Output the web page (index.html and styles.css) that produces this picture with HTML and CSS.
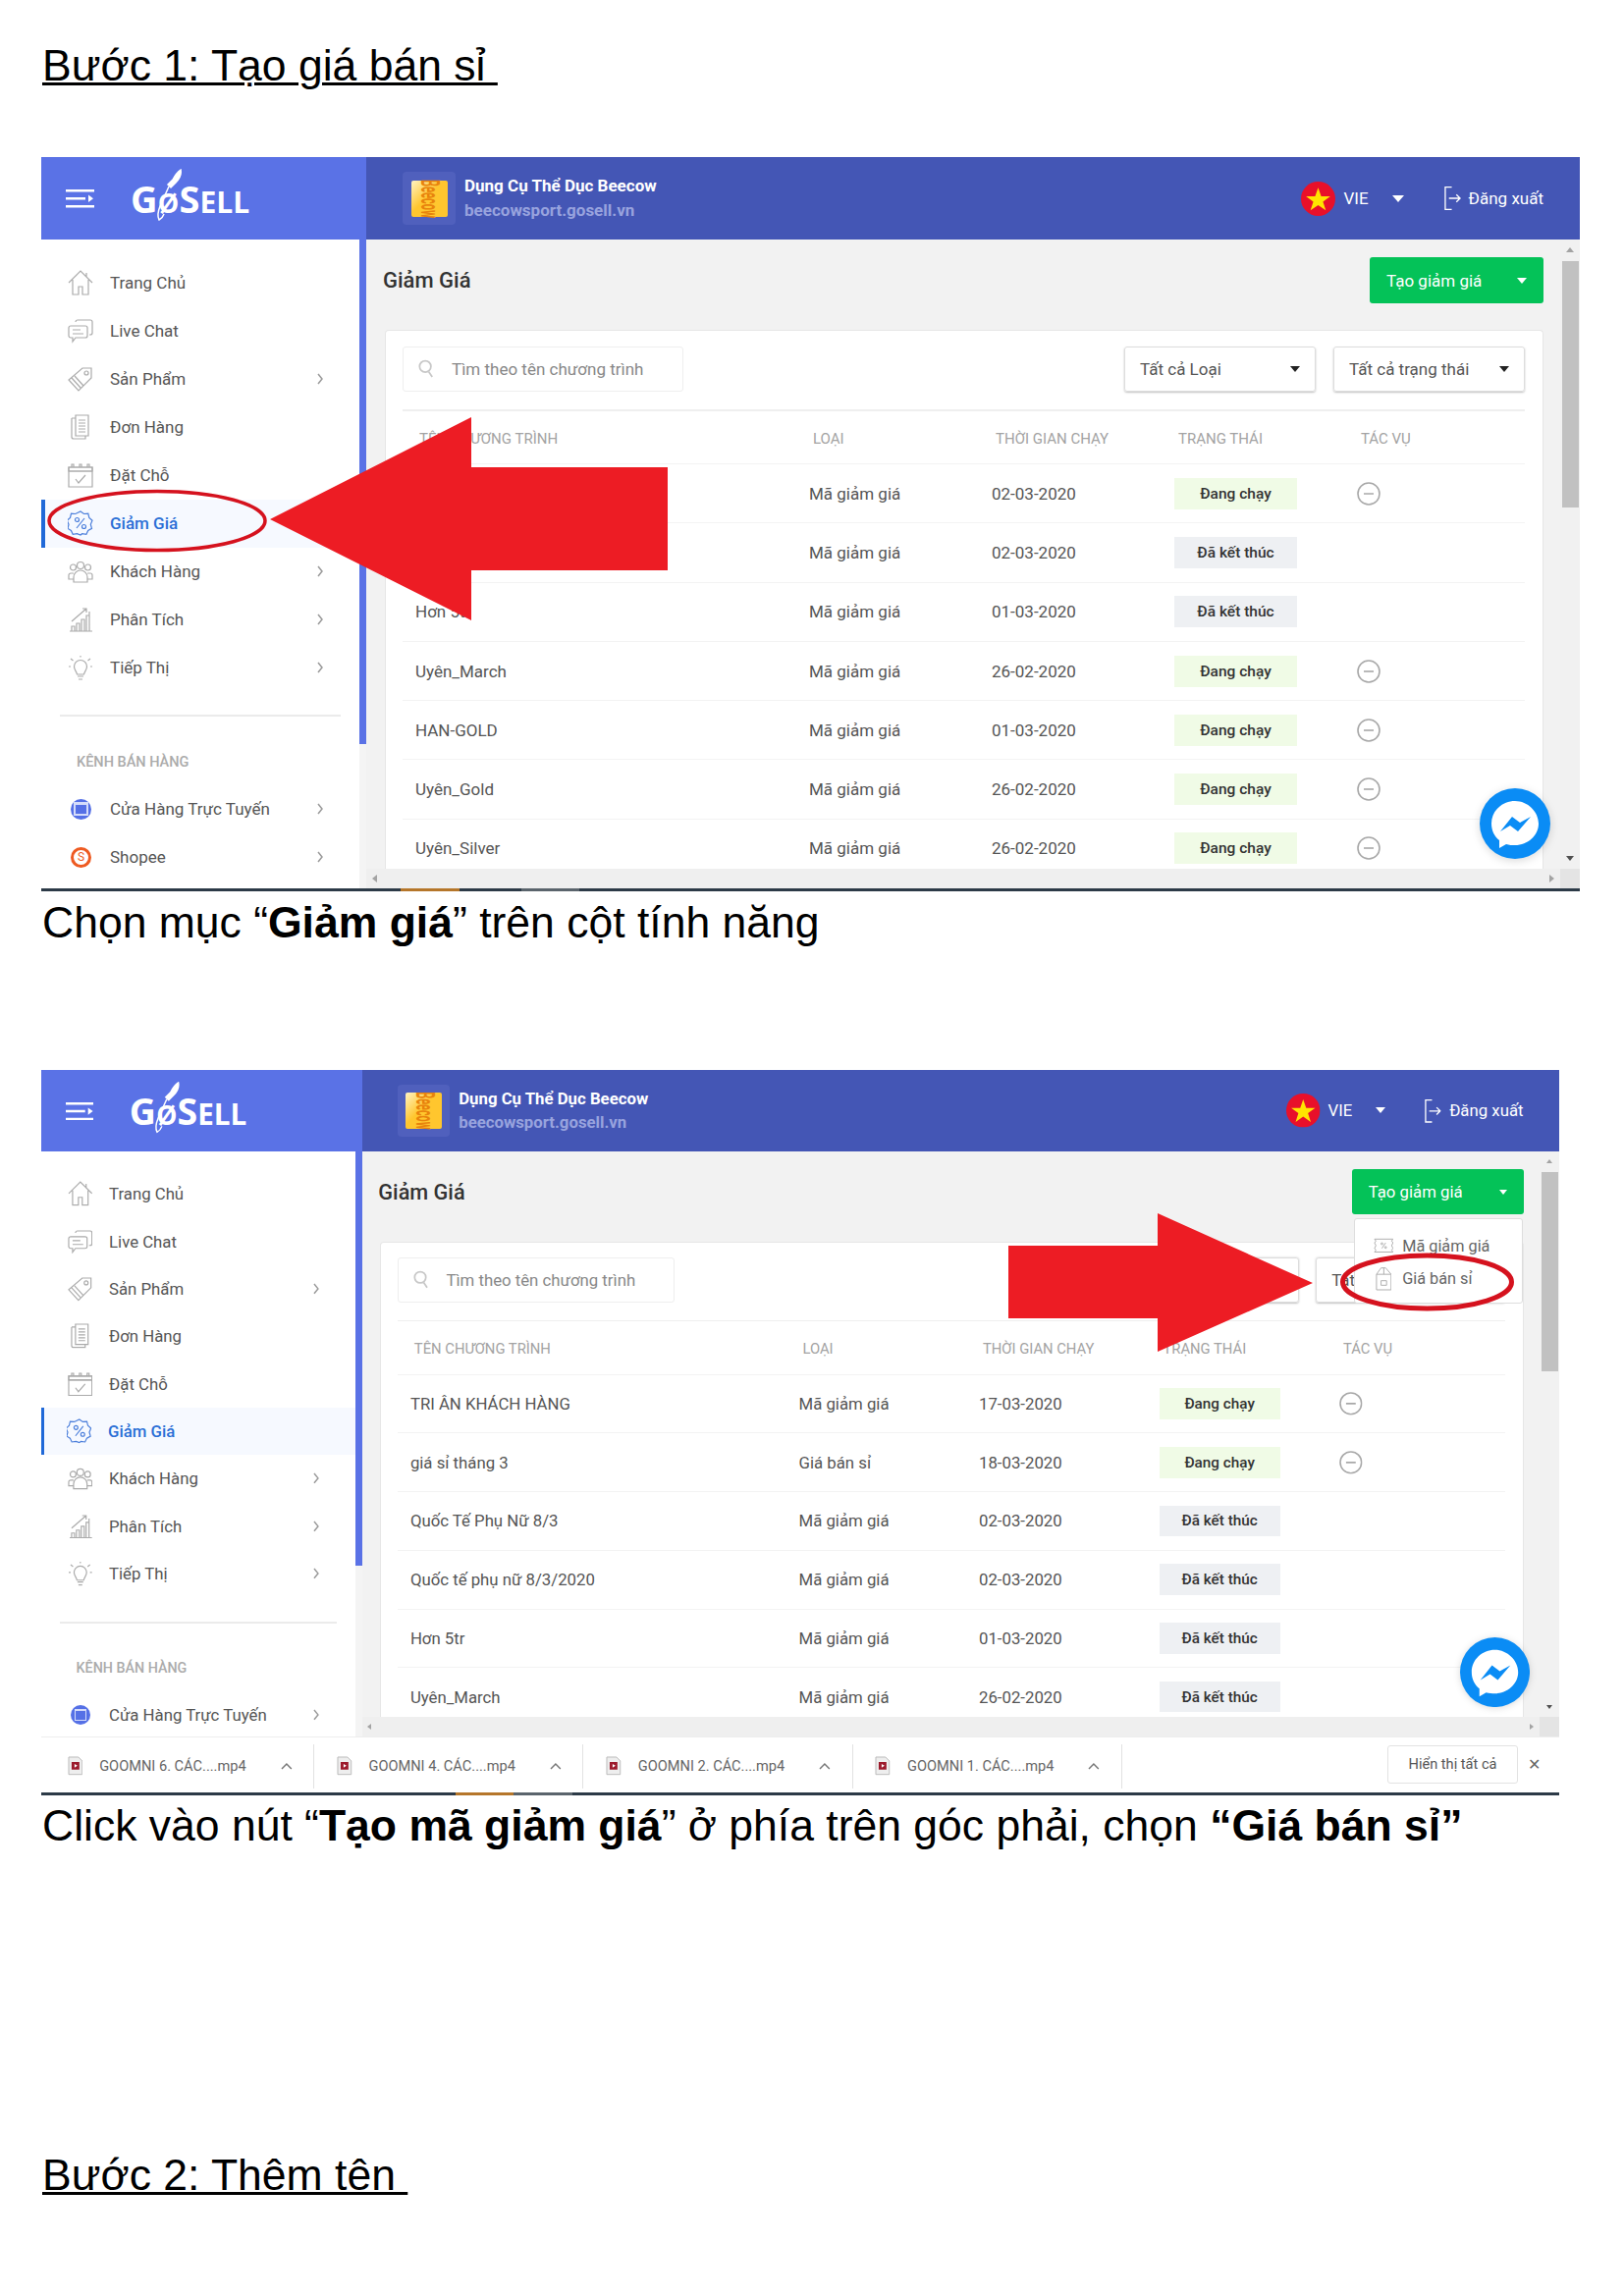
FILE: index.html
```html
<!DOCTYPE html>
<html lang="vi">
<head>
    <meta charset="UTF-8">
    <title>Tạo giá bán sỉ</title>
    <link rel="stylesheet" href="styles.css">
</head>
<body>
    <svg class="sprite" xmlns="http://www.w3.org/2000/svg">
        <symbol id="i-home" viewBox="0 0 26 26"><path d="M1 13 13 1l12 12M5 10v15h6v-8h4v8h6V10M19 7V3"/></symbol>
        <symbol id="i-chat" viewBox="0 0 26 26"><path d="M8 4a2 2 0 0 1 2-2h13a2 2 0 0 1 2 2v11a2 2 0 0 1-2 2h-1M3 8h15a2 2 0 0 1 2 2v8a2 2 0 0 1-2 2H8l-3 4v-4H3a2 2 0 0 1-2-2v-8a2 2 0 0 1 2-2zM5 12h8M5 16h11"/></symbol>
        <symbol id="i-tag" viewBox="0 0 26 26"><path d="M15 2h9v10L11 25 1 14zM4 12l9 10M7 10l9 10"/><circle cx="19" cy="7" r="2"/></symbol>
        <symbol id="i-orders" viewBox="0 0 26 26"><path d="M8 1h13v21H8zM4 4h4M4 4v19a2 2 0 0 0 2 2h12v-3M11 6h7M11 9h7M11 12h7M11 15h7M11 18h7"/></symbol>
        <symbol id="i-cal" viewBox="0 0 26 26"><path d="M1 5h24v20H1zM1 9h24M8 17l3 4 7-8"/><path class="fill" d="M1 5h24v4H1zM4 2h2v3H4zM12 2h2v3h-2zM20 2h2v3h-2z"/></symbol>
        <symbol id="i-percent" viewBox="0 0 26 26"><path d="m13 1 3.500 2.500 4.300-.3 1 4.200 3.200 2.800-1.700 4 1.200 4.200-3.800 2-1.800 3.900-4.300-.6L13 25l-3.500-1.300-4.300.6-1.800-3.900-3.400-2 1-4.200-1.700-4 3.200-2.800 1-4.200 4.300.3zM17 8l-8 10"/><circle cx="9.500" cy="9.500" r="2"/><circle cx="16.500" cy="16.500" r="2"/></symbol>
        <symbol id="i-users" viewBox="0 0 26 26"><circle cx="13" cy="7" r="3.500"/><circle cx="5.500" cy="9" r="3"/><circle cx="20.500" cy="9" r="3"/><path d="M6 24v-5a6 6 0 0 1 14 0v5zM6 15H3a2 2 0 0 0-2 2v4h5M20 15h3a2 2 0 0 1 2 2v4h-5"/></symbol>
        <symbol id="i-chart" viewBox="0 0 26 26"><path d="M2 25h23M4 25v-5h3v5M9 25v-8h3v8M14 25V13h3v12M19 25V9h3v16M4 15 19 2M15 2h4v4M22 5v4"/></symbol>
        <symbol id="i-bulb" viewBox="0 0 26 26"><path d="M6.500 12a6.500 6.500 0 1 1 13 0c0 3.500-2.500 5-3 8h-7c-.5-3-3-4.500-3-8zM10 22h6M11 25h4M13 1v1.500M3 4l2.500 2M23 4l-2.500 2M1 12h2M25 12h-2"/></symbol>
        <symbol id="i-search" viewBox="0 0 18 22"><circle cx="8" cy="8" r="6.500"/><path d="m12 14 4 6"/></symbol>
        <symbol id="i-chev" viewBox="0 0 8 14"><path d="m2 2 4 5-4 5"/></symbol>
        <symbol id="i-up" viewBox="0 0 12 8"><path d="m1 7 5-5 5 5"/></symbol>
        <symbol id="i-minus" viewBox="0 0 24 24"><circle cx="12" cy="12" r="11"/><path d="M7 12h10"/></symbol>
        <symbol id="i-ticket" viewBox="0 0 22 16"><path d="M1 1h20l-1.500 2 1.500 2-1.500 3 1.500 3-1.500 2 1.500 2H1l1.500-2L1 11l1.500-3L1 5l1.500-2zM9 11l4-6"/><circle cx="9" cy="6" r="1"/><circle cx="13" cy="10" r="1"/></symbol>
        <symbol id="i-pack" viewBox="0 0 18 26"><path d="M1 8h16v17H1zM1 8l5-7h5l6 7M9 1v7M6 15h6v5H6z"/></symbol>
        <symbol id="i-file" viewBox="0 0 16 20"><path class="paper" d="M1 1h10l4 4v14H1z"/><path class="red" d="M4 6h8v8H4z"/><path class="play" d="m7 8 3 2-3 2z"/></symbol>
        <symbol id="i-logout" viewBox="0 0 18 26"><path d="M8 1H1v24h7M5 13h12M13 9l4 4-4 4"/></symbol>
        <symbol id="i-messenger" viewBox="0 0 72 72"><circle class="msg-blue" cx="36" cy="36" r="36"/><path class="msg-white" d="M36 13c-13 0-24 10-24 23 0 7 3 13 8 17v8l7-4c3 1 6 1 9 1 13 0 24-10 24-22S49 13 36 13z"/><path class="msg-blue" d="m21 44 12-15 8 6 11-6-13 15-8-6z"/></symbol>
        <symbol id="i-burger" viewBox="0 0 29 20"><path d="M0 1h29v2.500H0zM0 9h20v2.500H0zM0 17h29v2.500H0zM23 6.500l5 3.700-5 3.700z"/></symbol>
        <symbol id="i-rocket" viewBox="0 0 30 56"><path class="rocket-body" d="M27 1c1 5-1 9-5 13l-5 5-3-3 5-5c2-4 5-8 8-10z"/><path d="M15 18 6 38c-2 5-3 10-1 14 2-1 4-3 5-6"/></symbol>
        <symbol id="i-star" viewBox="0 0 34 34"><circle class="flag-red" cx="17" cy="17" r="17"/><path class="flag-star" d="m17 6 3 8.500h9l-7.200 5.300 2.800 8.700-7.600-5.300-7.600 5.300 2.800-8.700L5 14.500h9z"/></symbol>
    </svg>

    <main class="page">
        <h1 class="step-title">Bước 1: Tạo giá bán sỉ&nbsp;</h1>

        <section class="shot">
            <div class="app">
                <header class="topbar">
                    <div class="topbar-left">
                        <svg class="burger"><use href="#i-burger"/></svg>
                        <div class="logo">G<span class="logo-o">ø</span>S<small>ELL</small><svg class="logo-rocket"><use href="#i-rocket"/></svg></div>
                    </div>
                    <div class="topbar-right">
                        <div class="store-logo"><div class="store-img"><span>Beecow</span></div></div>
                        <div class="store-info">
                            <strong>Dụng Cụ Thể Dục Beecow</strong>
                            <span>beecowsport.gosell.vn</span>
                        </div>
                        <div class="lang">
                            <svg class="flag"><use href="#i-star"/></svg>
                            <span>VIE</span>
                            <i class="caret caret-white"></i>
                        </div>
                        <div class="logout"><svg class="ico-logout"><use href="#i-logout"/></svg>Đăng xuất</div>
                    </div>
                </header>
                <div class="workspace workspace-a">
                    <aside class="sidebar">
                        <nav class="side-nav">
                            <a class="nav-item"><svg class="ico"><use href="#i-home"/></svg>Trang Chủ</a>
                            <a class="nav-item"><svg class="ico"><use href="#i-chat"/></svg>Live Chat</a>
                            <a class="nav-item"><svg class="ico"><use href="#i-tag"/></svg>Sản Phẩm<svg class="chev"><use href="#i-chev"/></svg></a>
                            <a class="nav-item"><svg class="ico"><use href="#i-orders"/></svg>Đơn Hàng</a>
                            <a class="nav-item"><svg class="ico"><use href="#i-cal"/></svg>Đặt Chỗ</a>
                            <a class="nav-item active"><svg class="ico"><use href="#i-percent"/></svg>Giảm Giá</a>
                            <a class="nav-item"><svg class="ico"><use href="#i-users"/></svg>Khách Hàng<svg class="chev"><use href="#i-chev"/></svg></a>
                            <a class="nav-item"><svg class="ico"><use href="#i-chart"/></svg>Phân Tích<svg class="chev"><use href="#i-chev"/></svg></a>
                            <a class="nav-item"><svg class="ico"><use href="#i-bulb"/></svg>Tiếp Thị<svg class="chev"><use href="#i-chev"/></svg></a>
                            <div class="nav-divider"></div>
                            <div class="nav-label">KÊNH BÁN HÀNG</div>
                            <a class="nav-item"><span class="channel channel-web"></span>Cửa Hàng Trực Tuyến<svg class="chev"><use href="#i-chev"/></svg></a>
                            <a class="nav-item"><span class="channel channel-shopee">S</span>Shopee<svg class="chev"><use href="#i-chev"/></svg></a>
                        </nav>
                        <div class="side-track"><div class="side-thumb side-thumb-a"></div></div>
                    </aside>
                    <div class="main">
                        <div class="content">
                            <div class="page-head">
                                <h2>Giảm Giá</h2>
                                <div class="btn-create">Tạo giảm giá<i class="caret caret-white"></i></div>
                            </div>
                            <div class="card">
                                <div class="filters">
                                    <div class="search"><svg class="ico-search"><use href="#i-search"/></svg>Tìm theo tên chương trình</div>
                                    <div class="selects">
                                        <div class="select">Tất cả Loại<i class="caret"></i></div>
                                        <div class="select">Tất cả trạng thái<i class="caret"></i></div>
                                    </div>
                                </div>
                                <div class="row row-head">
                                    <span>TÊN CHƯƠNG TRÌNH</span><span>LOẠI</span><span>THỜI GIAN CHẠY</span><span>TRẠNG THÁI</span><span>TÁC VỤ</span>
                                </div>
                                <div class="row"><span>Quốc Tế Phụ Nữ 8/3</span><span>Mã giảm giá</span><span>02-03-2020</span><span class="badge on">Đang chạy</span><svg class="ico-minus"><use href="#i-minus"/></svg></div>
                                <div class="row"><span>Quốc tế phụ nữ 8/3/2020</span><span>Mã giảm giá</span><span>02-03-2020</span><span class="badge off">Đã kết thúc</span></div>
                                <div class="row"><span>Hơn 5tr</span><span>Mã giảm giá</span><span>01-03-2020</span><span class="badge off">Đã kết thúc</span></div>
                                <div class="row"><span>Uyên_March</span><span>Mã giảm giá</span><span>26-02-2020</span><span class="badge on">Đang chạy</span><svg class="ico-minus"><use href="#i-minus"/></svg></div>
                                <div class="row"><span>HAN-GOLD</span><span>Mã giảm giá</span><span>01-03-2020</span><span class="badge on">Đang chạy</span><svg class="ico-minus"><use href="#i-minus"/></svg></div>
                                <div class="row"><span>Uyên_Gold</span><span>Mã giảm giá</span><span>26-02-2020</span><span class="badge on">Đang chạy</span><svg class="ico-minus"><use href="#i-minus"/></svg></div>
                                <div class="row"><span>Uyên_Silver</span><span>Mã giảm giá</span><span>26-02-2020</span><span class="badge on">Đang chạy</span><svg class="ico-minus"><use href="#i-minus"/></svg></div>
                            </div>
                            <div class="hscroll"><i class="arrow-left"></i><i class="arrow-right"></i></div>
                        </div>
                        <div class="vscroll">
                            <i class="arrow-up"></i>
                            <div class="v-thumb v-thumb-a"></div>
                            <i class="arrow-down"></i>
                            <div class="corner"></div>
                        </div>
                        <svg class="messenger"><use href="#i-messenger"/></svg>
                    </div>
                </div>
                <div class="taskline taskline-a"></div>
            </div>
            <svg class="marks" xmlns="http://www.w3.org/2000/svg">
                <ellipse class="ring" cx="118" cy="370.500" rx="110" ry="30"/>
                <polygon class="big-arrow" points="233,369 438,265 438,316 638,316 638,421 438,421 438,472"/>
            </svg>
        </section>

        <p class="caption caption-a">Chọn mục “<b>Giảm giá</b>” trên cột tính năng</p>

        <section class="shot shot-b">
            <div class="app app-small">
                <header class="topbar">
                    <div class="topbar-left">
                        <svg class="burger"><use href="#i-burger"/></svg>
                        <div class="logo">G<span class="logo-o">ø</span>S<small>ELL</small><svg class="logo-rocket"><use href="#i-rocket"/></svg></div>
                    </div>
                    <div class="topbar-right">
                        <div class="store-logo"><div class="store-img"><span>Beecow</span></div></div>
                        <div class="store-info">
                            <strong>Dụng Cụ Thể Dục Beecow</strong>
                            <span>beecowsport.gosell.vn</span>
                        </div>
                        <div class="lang">
                            <svg class="flag"><use href="#i-star"/></svg>
                            <span>VIE</span>
                            <i class="caret caret-white"></i>
                        </div>
                        <div class="logout"><svg class="ico-logout"><use href="#i-logout"/></svg>Đăng xuất</div>
                    </div>
                </header>
                <div class="workspace workspace-b">
                    <aside class="sidebar">
                        <nav class="side-nav">
                            <a class="nav-item"><svg class="ico"><use href="#i-home"/></svg>Trang Chủ</a>
                            <a class="nav-item"><svg class="ico"><use href="#i-chat"/></svg>Live Chat</a>
                            <a class="nav-item"><svg class="ico"><use href="#i-tag"/></svg>Sản Phẩm<svg class="chev"><use href="#i-chev"/></svg></a>
                            <a class="nav-item"><svg class="ico"><use href="#i-orders"/></svg>Đơn Hàng</a>
                            <a class="nav-item"><svg class="ico"><use href="#i-cal"/></svg>Đặt Chỗ</a>
                            <a class="nav-item active"><svg class="ico"><use href="#i-percent"/></svg>Giảm Giá</a>
                            <a class="nav-item"><svg class="ico"><use href="#i-users"/></svg>Khách Hàng<svg class="chev"><use href="#i-chev"/></svg></a>
                            <a class="nav-item"><svg class="ico"><use href="#i-chart"/></svg>Phân Tích<svg class="chev"><use href="#i-chev"/></svg></a>
                            <a class="nav-item"><svg class="ico"><use href="#i-bulb"/></svg>Tiếp Thị<svg class="chev"><use href="#i-chev"/></svg></a>
                            <div class="nav-divider"></div>
                            <div class="nav-label">KÊNH BÁN HÀNG</div>
                            <a class="nav-item"><span class="channel channel-web"></span>Cửa Hàng Trực Tuyến<svg class="chev"><use href="#i-chev"/></svg></a>
                        </nav>
                        <div class="side-track"><div class="side-thumb side-thumb-b"></div></div>
                    </aside>
                    <div class="main">
                        <div class="content">
                            <div class="page-head">
                                <h2>Giảm Giá</h2>
                                <div class="btn-create">Tạo giảm giá<i class="caret caret-white"></i>
                                    <div class="menu">
                                        <div class="menu-item"><svg class="ico-ticket"><use href="#i-ticket"/></svg>Mã giảm giá</div>
                                        <div class="menu-item"><svg class="ico-pack"><use href="#i-pack"/></svg>Giá bán sỉ</div>
                                    </div>
                                </div>
                            </div>
                            <div class="card">
                                <div class="filters">
                                    <div class="search"><svg class="ico-search"><use href="#i-search"/></svg>Tìm theo tên chương trình</div>
                                    <div class="selects">
                                        <div class="select">Tất cả Loại<i class="caret"></i></div>
                                        <div class="select select-short">Tất<i class="caret"></i></div>
                                    </div>
                                </div>
                                <div class="row row-head">
                                    <span>TÊN CHƯƠNG TRÌNH</span><span>LOẠI</span><span>THỜI GIAN CHẠY</span><span>TRẠNG THÁI</span><span>TÁC VỤ</span>
                                </div>
                                <div class="row"><span>TRI ÂN KHÁCH HÀNG</span><span>Mã giảm giá</span><span>17-03-2020</span><span class="badge on">Đang chạy</span><svg class="ico-minus"><use href="#i-minus"/></svg></div>
                                <div class="row"><span>giá sỉ tháng 3</span><span>Giá bán sỉ</span><span>18-03-2020</span><span class="badge on">Đang chạy</span><svg class="ico-minus"><use href="#i-minus"/></svg></div>
                                <div class="row"><span>Quốc Tế Phụ Nữ 8/3</span><span>Mã giảm giá</span><span>02-03-2020</span><span class="badge off">Đã kết thúc</span></div>
                                <div class="row"><span>Quốc tế phụ nữ 8/3/2020</span><span>Mã giảm giá</span><span>02-03-2020</span><span class="badge off">Đã kết thúc</span></div>
                                <div class="row"><span>Hơn 5tr</span><span>Mã giảm giá</span><span>01-03-2020</span><span class="badge off">Đã kết thúc</span></div>
                                <div class="row"><span>Uyên_March</span><span>Mã giảm giá</span><span>26-02-2020</span><span class="badge off">Đã kết thúc</span></div>
                            </div>
                            <div class="hscroll"><i class="arrow-left"></i><i class="arrow-right"></i></div>
                        </div>
                        <div class="vscroll">
                            <i class="arrow-up"></i>
                            <div class="v-thumb v-thumb-b"></div>
                            <i class="arrow-down"></i>
                            <div class="corner"></div>
                        </div>
                        <svg class="messenger"><use href="#i-messenger"/></svg>
                    </div>
                </div>
                <div class="downloads">
                    <div class="dl-item"><svg class="ico-file"><use href="#i-file"/></svg>GOOMNI 6. CÁC....mp4<svg class="dl-up"><use href="#i-up"/></svg></div>
                    <div class="dl-item"><svg class="ico-file"><use href="#i-file"/></svg>GOOMNI 4. CÁC....mp4<svg class="dl-up"><use href="#i-up"/></svg></div>
                    <div class="dl-item"><svg class="ico-file"><use href="#i-file"/></svg>GOOMNI 2. CÁC....mp4<svg class="dl-up"><use href="#i-up"/></svg></div>
                    <div class="dl-item"><svg class="ico-file"><use href="#i-file"/></svg>GOOMNI 1. CÁC....mp4<svg class="dl-up"><use href="#i-up"/></svg></div>
                    <div class="dl-all">Hiển thị tất cả</div>
                    <div class="dl-close">✕</div>
                </div>
                <div class="taskline taskline-b"></div>
            </div>
            <svg class="marks" xmlns="http://www.w3.org/2000/svg">
                <polygon class="big-arrow" points="1295,217 1137,146 1137,179 985,179 985,253 1137,253 1137,287"/>
                <ellipse class="ring ring-thick" cx="1411.500" cy="216" rx="86" ry="27"/>
            </svg>
        </section>

        <p class="caption caption-b">Click vào nút “<b>Tạo mã giảm giá</b>” ở phía trên góc phải, chọn <b>“Giá bán sỉ”</b></p>

        <h1 class="step-title step-two">Bước 2: Thêm tên&nbsp;</h1>
    </main>
</body>
</html>
```

FILE: styles.css
```css
* {
    box-sizing: border-box;
}
body {
    margin: 0;
    background-color: #FFFFFF;
    color: #000000;
    font-family: 'Liberation Sans', Arial, sans-serif;
}
.sprite {
    display: none;
}
.page {
    padding: 42px 0 0 42px;
}
.step-title {
    margin: 0 0 0 1px;
    font-size: 44.500px;
    font-weight: 400;
    line-height: 50px;
    text-decoration: underline;
    text-decoration-thickness: 3px;
}
.step-two {
    margin-top: 306px;
}
.caption {
    margin: 0 0 0 1px;
    font-size: 44.500px;
    line-height: 50px;
}
.caption-a {
    margin-top: 7px;
}
.caption-b {
    margin-top: 6px;
}

/* screenshot frames */
.shot {
    position: relative;
    width: 1567px;
    margin-top: 68px;
}
.shot-b {
    width: 1546px;
    margin-top: 125px;
}
.app {
    width: 1567px;
    font-family: Roboto, sans-serif;
    font-size: 17px;
    color: #555555;
}
.app-small {
    zoom: 0.9866; /* second capture is a little smaller */
}
.marks {
    position: absolute;
    top: 0;
    left: 0;
    z-index: 3;
    width: 100%;
    height: 100%;
    pointer-events: none;
}
.big-arrow {
    fill: #ED1C24;
}
.ring {
    fill: none;
    stroke: #D5121E;
    stroke-width: 3.500;
}
.ring-thick {
    stroke-width: 5;
}

/* top bar */
.topbar {
    display: flex;
    height: 84px;
}
.topbar-left {
    display: flex;
    align-items: center;
    width: 331px;
    padding-left: 25px;
    background-color: #5A72E6;
}
.burger {
    width: 29px;
    height: 20px;
    margin-right: 37px;
    fill: #FFFFFF;
}
.logo {
    position: relative;
    font-family: 'Open Sans', sans-serif;
    font-size: 38px;
    font-weight: 700;
    color: #FFFFFF;
}
.logo small {
    font-size: 30px;
}
.logo-o {
    display: inline-block;
    font-size: 36px;
    font-weight: 600;
}
.logo-rocket {
    position: absolute;
    top: -4px;
    left: 24px;
    width: 30px;
    height: 56px;
    fill: none;
    stroke: #FFFFFF;
    stroke-width: 1.500;
}
.rocket-body {
    fill: #FFFFFF;
}
.topbar-right {
    display: flex;
    flex: 1;
    align-items: center;
    padding: 0 37px;
    background-color: #4456B5;
    color: #FFFFFF;
}
.store-logo {
    display: flex;
    align-items: center;
    justify-content: center;
    width: 54px;
    height: 54px;
    border-radius: 4px;
    background-color: #5060BD;
}
.store-img {
    display: flex;
    align-items: center;
    justify-content: center;
    width: 37px;
    height: 37px;
    border-radius: 2px;
    background: linear-gradient(135deg, #FFF3C4, #FFC62E 45%);
}
.store-img span {
    font-size: 11px;
    font-weight: 700;
    color: #E8830C;
    transform: rotate(90deg) scaleY(2.400);
}
.store-info {
    display: flex;
    flex-direction: column;
    gap: 6px;
    margin-left: 9px;
    font-size: 17px;
    font-weight: 700;
    line-height: 19px;
}
.store-info strong {
    font-weight: 700;
}
.store-info span {
    color: #98A3DE;
}
.lang {
    display: flex;
    align-items: center;
    margin-left: auto;
}
.flag {
    width: 35px;
    height: 35px;
    margin-right: 8px;
}
.flag-red {
    fill: #E8102A;
}
.flag-star {
    fill: #FFE500;
}
.caret {
    display: inline-block;
    width: 0;
    height: 0;
    border-top: 6px solid #222222;
    border-right: 5px solid transparent;
    border-left: 5px solid transparent;
}
.caret-white {
    border-top-color: #FFFFFF;
}
.lang .caret {
    margin-left: 24px;
    border-top-width: 7px;
    border-right-width: 6px;
    border-left-width: 6px;
}
.logout {
    display: flex;
    align-items: center;
    margin-left: 41px;
}
.ico-logout {
    width: 17px;
    height: 26px;
    margin-right: 8px;
    fill: none;
    stroke: #FFFFFF;
    stroke-width: 1.400;
}

/* sidebar */
.workspace {
    display: flex;
}
.workspace-a {
    height: 661px;
}
.workspace-b {
    height: 604px;
}
.sidebar {
    display: flex;
    width: 331px;
    overflow: hidden;
    background-color: #FFFFFF;
}
.side-nav {
    flex: 1;
    padding-top: 19.500px;
}
.nav-item {
    display: flex;
    align-items: center;
    height: 49px;
    padding-left: 27px;
    padding-right: 36px;
}
.nav-item.active {
    padding-left: 23px;
    border-left: 4px solid #2069D8;
    background-color: #F6F9FF;
    font-weight: 500;
    color: #2A6FD6;
}
.ico {
    width: 26px;
    height: 26px;
    flex: none;
    margin-right: 17px;
    fill: none;
    stroke: #ABABAB;
    stroke-width: 1.200;
}
.ico .fill {
    fill: #ABABAB;
    stroke: none;
}
.active .ico {
    stroke: #4C7FDB;
}
.chev {
    width: 8px;
    height: 14px;
    margin-left: auto;
    fill: none;
    stroke: #9A9A9A;
    stroke-width: 1.500;
}
.nav-divider {
    height: 2px;
    margin: 23px 19px 0;
    background-color: #EBEBEB;
}
.app-small .nav-divider {
    margin-top: 25px;
}
.nav-label {
    margin-top: 37px;
    margin-bottom: 13px;
    padding-left: 36px;
    font-size: 14.500px;
    font-weight: 500;
    line-height: 20px;
    color: #ABABAB;
}
.channel {
    display: flex;
    align-items: center;
    justify-content: center;
    width: 21px;
    height: 21px;
    flex: none;
    margin: 0 19px 0 3px;
    border-radius: 50%;
    background-color: #5570E6;
    font-size: 12px;
}
.channel-web::before {
    content: "";
    width: 11px;
    height: 9px;
    border: 2px solid #D5DCFA;
    border-top-width: 3px;
}
.channel-shopee {
    background-color: #FFFFFF;
    border: 3px solid #EE5B22;
    color: #EE5B22;
}
.side-track {
    width: 7px;
    background-color: #F4F4F4;
}
.side-thumb {
    width: 7px;
    background-color: #5A72E6;
}
.side-thumb-a {
    height: 514px;
}
.side-thumb-b {
    height: 428px;
}

/* main area */
.main {
    position: relative;
    display: flex;
    flex: 1;
    min-width: 0;
    background-color: #F2F2F2;
}
.content {
    display: flex;
    flex: 1;
    flex-direction: column;
    min-width: 0;
}
.page-head {
    display: flex;
    align-items: center;
    justify-content: space-between;
    height: 92px;
    flex: none;
    padding: 18px 17px 27px 17px;
}
.app-small .page-head {
    height: 93px;
}
.page-head h2 {
    margin: 0;
    font-size: 22px;
    font-weight: 500;
    color: #333333;
}
.btn-create {
    position: relative;
    display: flex;
    align-items: center;
    justify-content: space-between;
    width: 177px;
    height: 47px;
    padding: 0 17px;
    border-radius: 3px;
    background-color: #04C258;
    color: #FFFFFF;
}
.menu {
    position: absolute;
    top: 51px;
    right: 1px;
    z-index: 2;
    width: 174px;
    height: 88px;
    padding-top: 10px;
    border: 1px solid #DDDDDD;
    border-radius: 3px;
    background-color: #FFFFFF;
    color: #666666;
}
.menu-item {
    display: flex;
    align-items: center;
    height: 34px;
    padding-left: 19px;
    font-size: 16.500px;
}
.ico-ticket {
    width: 21px;
    height: 16px;
    margin-right: 9px;
    fill: none;
    stroke: #ABABAB;
}
.ico-pack {
    width: 17px;
    height: 26px;
    margin: 0 11px 0 2px;
    fill: none;
    stroke: #ABABAB;
}
.card {
    flex: 1;
    min-height: 0;
    margin: 0 17px 0 19px;
    padding: 16px 18px 0 17px;
    overflow: hidden;
    border: 1px solid #E6E6E6;
    border-bottom: 0;
    border-radius: 4px 4px 0 0;
    background-color: #FFFFFF;
}
.filters {
    display: flex;
    justify-content: space-between;
    padding-bottom: 18px;
    border-bottom: 2px solid #EFEFEF;
}
.search {
    display: flex;
    align-items: center;
    width: 286px;
    height: 46px;
    padding-left: 15px;
    border: 1px solid #EEEEEE;
    border-radius: 3px;
    color: #888888;
}
.ico-search {
    width: 16px;
    height: 20px;
    margin-right: 18px;
    fill: none;
    stroke: #C8C8C8;
    stroke-width: 2;
}
.selects {
    display: flex;
    gap: 18px;
}
.select {
    display: flex;
    align-items: center;
    justify-content: space-between;
    width: 195px;
    height: 46px;
    padding: 0 15px;
    border: 1px solid #DDDDDD;
    border-radius: 3px;
    box-shadow: 0 1px 2px rgba(0, 0, 0, 0.25);
    white-space: nowrap;
}
.row {
    display: grid;
    grid-template-columns: 401px 186px 186px 186px 1fr;
    align-items: center;
    height: 60.300px;
    padding-left: 13px;
    border-bottom: 1px solid #F3F3F3;
}
.app-small .row {
    height: 60.500px;
}
.row.row-head {
    height: 54px;
    padding-top: 2px;
    padding-left: 17px;
    font-size: 15px;
    color: #A3A3A3;
}
.app-small .row.row-head {
    height: 56px;
}
.row-head span {
    white-space: nowrap;
}
.badge {
    display: flex;
    align-items: center;
    justify-content: center;
    width: 125px;
    height: 32px;
    font-size: 15.500px;
    font-weight: 500;
    color: #333333;
}
.badge.on {
    background-color: #F0FBE6;
}
.badge.off {
    background-color: #EEF0F3;
}
.ico-minus {
    width: 24px;
    height: 24px;
    fill: none;
    stroke: #A8A8A8;
    stroke-width: 1.600;
}
.messenger {
    position: absolute;
    right: 30px;
    bottom: 30px;
    width: 72px;
    height: 72px;
    filter: drop-shadow(0 2px 4px rgba(0, 0, 0, 0.15));
}
.msg-blue {
    fill: #0A8CF5;
}
.msg-white {
    fill: #FFFFFF;
}

/* browser scrollbars */
.hscroll {
    display: flex;
    align-items: center;
    justify-content: space-between;
    height: 20px;
    flex: none;
    padding: 0 6px;
    background-color: #EFEFEF;
}
.vscroll {
    display: flex;
    flex-direction: column;
    align-items: center;
    width: 20px;
    background-color: #F1F1F1;
}
.arrow-up,
.arrow-down,
.arrow-left,
.arrow-right {
    display: block;
    width: 0;
    height: 0;
    border-style: solid;
    border-color: transparent;
}
.arrow-up {
    margin-top: 8px;
    border-width: 0 4px 5px;
    border-bottom-color: #A3A3A3;
}
.v-thumb {
    width: 17px;
    margin-top: 9px;
    background-color: #C1C1C1;
}
.v-thumb-a {
    height: 251px;
}
.v-thumb-b {
    height: 206px;
}
.arrow-down {
    margin-top: auto;
    margin-bottom: 8px;
    border-width: 5px 4px 0;
    border-top-color: #505050;
}
.arrow-left {
    border-width: 4px 5px 4px 0;
    border-right-color: #A3A3A3;
}
.arrow-right {
    border-width: 4px 0 4px 5px;
    border-left-color: #A3A3A3;
}
.corner {
    width: 20px;
    height: 20px;
    background-color: #E4E4E4;
}

/* downloads bar */
.downloads {
    display: flex;
    align-items: center;
    height: 58px;
    padding-top: 3px;
    padding-left: 4px;
    border-top: 2px solid #EDEDED;
    background-color: #FFFFFF;
    font-size: 14.800px;
    color: #666666;
}
.dl-item {
    display: flex;
    align-items: center;
    width: 278px;
    height: 46px;
    padding-left: 23px;
    padding-right: 22px;
    border-right: 1px solid #E2E2E2;
    white-space: nowrap;
}
.ico-file {
    width: 16px;
    height: 20px;
    margin-right: 17px;
}
.paper {
    fill: #EEEEEE;
    stroke: #BBBBBB;
}
.red {
    fill: #9C1A2C;
}
.play {
    fill: #FFFFFF;
}
.dl-up {
    width: 12px;
    height: 8px;
    margin-left: auto;
    fill: none;
    stroke: #777777;
    stroke-width: 1.500;
}
.dl-all {
    display: flex;
    align-items: center;
    justify-content: center;
    width: 134px;
    height: 39px;
    margin-left: auto;
    margin-right: 11px;
    margin-bottom: 4px;
    border: 1px solid #E2E2E2;
    border-radius: 3px;
    color: #555555;
}
.dl-close {
    width: 32px;
    margin-bottom: 4px;
    font-size: 16px;
    color: #666666;
}

/* taskbar sliver at the bottom of each capture */
.taskline {
    height: 3px;
}
.taskline-a {
    background: linear-gradient(90deg, #2C3A47 366px, #B5762A 366px, #B5762A 426px, #2C3A47 426px, #2C3A47 489px, #5A646C 489px, #5A646C 548px, #2C3A47 548px);
}
.taskline-b {
    background: linear-gradient(90deg, #2C3A47 428px, #B5762A 428px, #B5762A 488px, #5A646C 488px, #5A646C 548px, #2C3A47 548px);
}
```
